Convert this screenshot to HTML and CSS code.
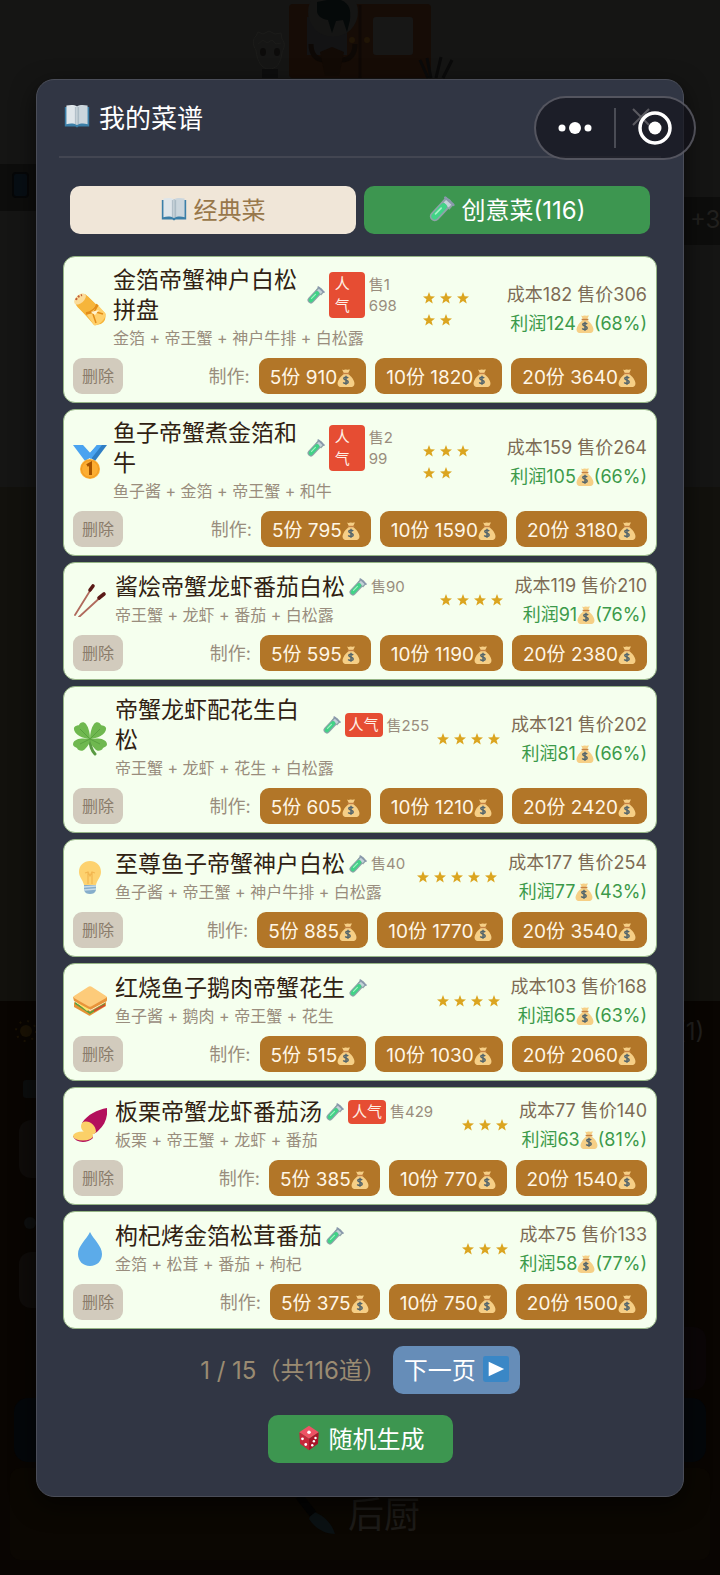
FILE: index.html
```html
<!DOCTYPE html>
<html lang="zh-CN">
<head>
  <meta charset="UTF-8">
  <meta name="viewport" content="width=device-width, initial-scale=1.0">
  <title>我的菜谱</title>
  <link rel="stylesheet" href="styles.css">
</head>
<body>

  <!-- icon set -->
  <svg class="sprite" aria-hidden="true">
    <symbol id="i-book" viewBox="0 0 32 32">
      <path fill="#3b7fa8" d="M1 5h30v24H18l-2 1-2-1H1z"/>
      <path fill="#dfe6ea" d="M3 3c5-1 10-1 13 1v23c-4-2-8-2-13-1z"/>
      <path fill="#cbd6dd" d="M29 3c-5-1-10-1-13 1v23c4-2 8-2 13-1z"/>
      <path fill="none" stroke="#9fb0bb" stroke-width="1" d="M16 4v23M14 5v21M18 5v21"/>
    </symbol>
    <symbol id="i-tube" viewBox="0 0 32 32">
      <path stroke="#8fa3a8" stroke-width="12" stroke-linecap="round" d="M7 25L22 9"/>
      <path fill="#8fa3a8" d="M15 8l6-7 10 9-6 7z"/>
      <path fill="#c3d3d8" d="M18 8l4-4 6 6-4 4z"/>
      <path stroke="#41d387" stroke-width="8" stroke-linecap="round" d="M7 25l11-12"/>
      <path stroke="#8a98ac" stroke-width="3" stroke-linecap="round" d="M20 2l10 9"/>
      <path stroke="#a5f3c4" stroke-width="2" stroke-linecap="round" d="M8 22l7-7"/>
    </symbol>
    <symbol id="i-bag" viewBox="0 0 32 32">
      <path fill="#f6cf86" d="M12 9h8c5 4 11 11 11 17 0 4-3 6-7 6H8c-4 0-7-2-7-6C1 20 7 13 12 9z"/>
      <path fill="#f6cf86" d="M9 1c3 2 5-1 7 0s4-1 7 0l-3 6h-8z"/>
      <path stroke="#c78243" stroke-width="2.500" d="M10 8h12"/>
      <path fill="none" stroke="#54656b" stroke-width="2.600" d="M20 16c-2-2-8-2-8 1s8 3 8 6-6 4-9 1M16 12v16"/>
    </symbol>
    <symbol id="i-star" viewBox="0 0 24 24">
      <path fill="#dba520" d="M12 0l3.200 8.400 8.800.5-6.900 5.600L19.500 23 12 18.200 4.500 23l2.400-8.500L0 8.900l8.800-.5z"/>
    </symbol>
    <symbol id="i-burrito" viewBox="0 0 34 34">
      <path stroke="#f6b53b" stroke-width="15" stroke-linecap="round" d="M10 10l15 15"/>
      <path fill="#f6b53b" d="M2 11L12 2l20 19c3 4-7 14-11 12z"/>
      <ellipse cx="7" cy="7" rx="7" ry="4" transform="rotate(-42 7 7)" fill="#fbdc9a"/>
      <path fill="none" stroke="#c0603a" stroke-width="2" stroke-dasharray="2 1.500" d="M3 8c1-3 3-4 6-5"/>
      <path fill="#ffd06c" d="M14 23l10-11 8 9c3 4-7 14-11 12z"/>
      <path fill="none" stroke="#e38d18" stroke-width="1.500" d="M13 21c5-1 9-4 11-9M13 22l8-2 4-7M23 20l7 2M20 22l3 9"/>
      <path fill="#fff3d0" d="M18 20l8-2-4 5z"/>
    </symbol>
    <symbol id="i-medal" viewBox="0 0 34 34">
      <path fill="#4aa3f0" d="M0 0h10l10 11-8 5z"/>
      <path fill="#2f7ec4" d="M24 0h10L22 16l-7-5z"/>
      <path fill="#4aa3f0" d="M24 0l5 0-11 14-4-3z"/>
      <circle cx="17" cy="24" r="10" fill="#fcae33"/>
      <circle cx="17" cy="24" r="8.500" fill="none" stroke="#f19a20"/>
      <path fill="none" stroke="#a55300" stroke-width="3" d="M14 20.500l3.500-2V30"/>
    </symbol>
    <symbol id="i-sticks" viewBox="0 0 34 34">
      <path stroke="#b06a5c" stroke-width="1.800" stroke-linecap="round" d="M2 32L20 3M6 34L31 11"/>
      <path stroke="#5a1a17" stroke-width="3.600" stroke-linecap="round" d="M17 7l3-4M26 15l5-4"/>
    </symbol>
    <symbol id="i-clover" viewBox="0 0 34 34">
      <path fill="none" stroke="#5a9a43" stroke-width="3" stroke-linecap="round" d="M17 17c0 7 2 12 5 15"/>
      <g fill="#6fb84f">
        <path d="M17 17C10 17 0 12 1 6c1-3 4-2 5-3 1-3 5-4 7-1 3 4 4 10 4 15z"/>
        <path d="M17 17c7 0 17-5 16-11-1-3-4-2-5-3-1-3-5-4-7-1-3 4-4 10-4 15z"/>
        <path d="M17 17c-7-1-16-1-17 5 0 3 3 3 4 4 1 3 6 4 8 1 3-3 5-6 5-10z"/>
        <path d="M17 17c7-1 16-1 17 5 0 3-3 3-4 4-1 3-6 4-8 1-3-3-5-6-5-10z"/>
      </g>
      <path stroke="#5aa240" d="M17 17L7 7M17 17L27 7M17 17L7 22M17 17l10 5"/>
    </symbol>
    <symbol id="i-bulb" viewBox="0 0 34 34">
      <path fill="#fdd26f" d="M17 1c6 0 11 4 11 11 0 5-4 8-5 13H11C10 20 6 17 6 12 6 5 11 1 17 1z"/>
      <path fill="none" stroke="#f2b650" stroke-width="1.200" d="M12 13l3-1 2 4 2-4 3 1M15 12v12M19 12v12"/>
      <path fill="#86aecb" d="M11 25h12v5c-1 3-3 4-6 4s-5-1-6-4z"/>
      <path stroke="#c6dbe9" stroke-width="1.500" d="M11 27l12-1M11 30l12-1"/>
    </symbol>
    <symbol id="i-sandwich" viewBox="0 0 34 34">
      <path fill="#e59335" d="M1 18l16 9 16-9v4L18 31c-1 1-2 1-3 0L1 23z"/>
      <path fill="#5aa040" d="M2 18l15 10 15-9v2L17 30 2 20z"/>
      <path fill="#d24b31" d="M21 26l11-6v2l-11 6z"/>
      <path fill="#fde26b" d="M3 18l11 9 6-4z"/>
      <path fill="#e8943a" d="M0 13h34v3c0 1-1 2-2 2L19 25c-1 1-2 1-3 0L1 17z"/>
      <path fill="#fdcb7a" d="M1 12L15 3c1-1 3-1 4 0l14 9c1 1 1 1 0 2l-14 8c-1 1-3 1-4 0L1 14c-1-1-1-1 0-2z"/>
    </symbol>
    <symbol id="i-potato" viewBox="0 0 34 34">
      <path fill="#b3105c" d="M34 0c1 9-2 17-9 23-4 4-9 4-12 2L9 15C15 6 24 2 34 0z"/>
      <path fill="#fbd068" d="M9 15c5-4 14 1 14 9-3 4-8 4-11 1-4-3-5-7-3-10z"/>
      <path fill="#b3105c" d="M0 28c2 7 14 8 20 2l-1-3z"/>
      <ellipse cx="10" cy="28" rx="10" ry="4.500" fill="#fbd068"/>
    </symbol>
    <symbol id="i-drop" viewBox="0 0 34 34">
      <path fill="#5cabe9" d="M17 0c4 8 12 14 12 22 0 7-5 12-12 12S5 29 5 22C5 14 13 8 17 0z"/>
    </symbol>
    <symbol id="i-play" viewBox="0 0 32 32">
      <rect width="32" height="32" rx="3" fill="#3a87c6"/>
      <path fill="#fff" d="M7 7l19 9-19 9z"/>
    </symbol>
    <symbol id="i-dice" viewBox="0 0 32 32">
      <path fill="#ee5365" d="M16 1l12 8-12 8L4 9z"/>
      <path fill="#c7283b" d="M4 9l12 8v14L5 23z"/>
      <path fill="#a91629" d="M28 9l-12 8v14l11-8z"/>
      <g fill="#fff"><circle cx="16" cy="9" r="2.200"/><circle cx="8" cy="17" r="1.700"/><circle cx="12" cy="24" r="1.700"/><circle cx="24" cy="16" r="1.500"/><circle cx="22" cy="20" r="1.500"/><circle cx="20" cy="25" r="1.500"/></g>
    </symbol>
  </svg>

  <!-- dimmed restaurant behind the dialog -->
  <div class="scene" aria-hidden="true">
    <svg viewBox="0 0 720 1575">
      <rect width="720" height="487" fill="#151514"/>
      <rect y="487" width="720" height="514" fill="#12110d"/>
      <rect y="1001" width="720" height="574" fill="#090502"/>
      <rect x="289" y="4" width="142" height="74" rx="4" fill="#160c06"/>
      <rect x="307" y="17" width="40" height="38" fill="#131314"/>
      <rect x="373" y="17" width="40" height="38" rx="3" fill="#171716"/>
      <path stroke="#0f0805" stroke-width="3" d="M360 5v73"/>
      <circle cx="352" cy="40" r="3" fill="#201506"/><circle cx="367" cy="40" r="3" fill="#201506"/>
      <circle cx="333" cy="12" r="25" fill="#151514"/>
      <path fill="#050909" d="M317 2l10-2h14c9 4 10 10 9 20l-3 12-4-12-7 1-4 12-4-13c-7-1-11-5-11-9z"/>
      <path fill="none" stroke="#0d0805" stroke-width="5" d="M311 44c0 10 5 16 14 16M355 44c0 10-5 16-14 16"/>
      <path fill="#120a05" d="M320 52l12-5 12 5-5 24h-14z"/>
      <path fill="#161615" stroke="#1c1c1a" d="M256 50c-4-5-3-12 0-14l2-4 5 2 6-3 6 3 6-1 1 6c4 5 2 9 0 13-1 12-6 17-13 17s-12-7-13-19z"/>
      <path fill="none" stroke="#1b1b19" d="M258 44l5-4 4 3 5-3 4 4 5-1"/>
      <ellipse cx="263" cy="52" rx="3" ry="4" fill="#0c0b0a"/><ellipse cx="277" cy="52" rx="3" ry="4" fill="#0c0b0a"/>
      <path fill="#0d0d0d" d="M262 69h16v9h-16z"/>
      <path fill="none" stroke="#0a0a0a" stroke-width="3" d="M420 60l8 18M427 58l4 20M441 57l-5 21M452 60l-9 18"/>
      <rect x="-20" y="164" width="80" height="47" rx="12" fill="#0d0d0c"/>
      <rect x="13" y="173" width="15" height="24" rx="3" fill="#070e14" stroke="#060708" stroke-width="2"/>
      <rect x="640" y="197" width="100" height="48" rx="4" fill="#0d0d0c"/>
      <text x="690" y="228" class="scene-label">+3</text>
      <circle cx="26" cy="1031" r="6" fill="#1a1204"/>
      <circle cx="26" cy="1031" r="10" fill="none" stroke="#1a1204" stroke-width="2" stroke-dasharray="2 6"/>
      <text x="677" y="1040" class="scene-label">(1)</text>
      <rect x="23" y="1080" width="20" height="18" rx="3" fill="#0c0e0e"/>
      <rect x="19" y="1120" width="90" height="58" rx="12" fill="#0f0c0a"/>
      <circle cx="30" cy="1223" r="6" fill="#0e0f0f"/>
      <rect x="19" y="1252" width="90" height="56" rx="12" fill="#0f0c0a"/>
      <rect x="600" y="1327" width="106" height="63" rx="12" fill="#0b0607"/>
      <rect x="14" y="1398" width="692" height="64" rx="14" fill="#04070a"/>
      <rect x="10" y="1468" width="700" height="92" rx="10" fill="#0b0702"/>
      <path fill="#0b1113" d="M312 1511c12 4 20 13 23 23-11 0-20-6-26-15z"/>
      <path stroke="#030303" stroke-width="8" d="M299 1496l14 18"/>
      <text x="348" y="1528" class="scene-title">后厨</text>
    </svg>
  </div>

  <div class="overlay">
    <main class="modal" role="dialog" aria-labelledby="title">
      <header class="modal-header">
        <h1 id="title"><svg class="icon-lg"><use href="#i-book"/></svg>我的菜谱</h1>
        <button type="button" class="close" aria-label="关闭">
          <svg width="18" height="18" viewBox="0 0 18 18"><path stroke="#fff" stroke-width="2" d="M1 1l16 16M17 1L1 17"/></svg>
        </button>
      </header>

      <div class="modal-body">
        <nav class="tabs">
          <button type="button" class="tab"><svg class="icon-lg"><use href="#i-book"/></svg>经典菜</button>
          <button type="button" class="tab active"><svg class="icon-lg"><use href="#i-tube"/></svg>创意菜(116)</button>
        </nav>

        <div class="dish-list" id="dishList"></div>

        <div class="pager">
          <span>1 / 15（共116道）</span>
          <button type="button" class="next">下一页<svg class="icon-lg"><use href="#i-play"/></svg></button>
        </div>
        <button type="button" class="random"><svg class="icon-lg"><use href="#i-dice"/></svg>随机生成</button>
      </div>
    </main>
  </div>

  <div class="capsule">
    <button type="button" aria-label="更多">
      <svg width="36" height="14" viewBox="0 0 36 14" fill="#fff"><circle cx="5" cy="7" r="3.500"/><circle cx="18" cy="7" r="6"/><circle cx="31" cy="7" r="3.500"/></svg>
    </button>
    <button type="button" aria-label="退出">
      <svg width="34" height="34" viewBox="0 0 34 34"><circle cx="17" cy="17" r="15" fill="none" stroke="#fff" stroke-width="3.500"/><circle cx="17" cy="17" r="6.500" fill="#fff"/></svg>
    </button>
  </div>

  <script>
    const dishes = [
      { icon: 'burrito', name: '金箔帝蟹神户白松拼盘', parts: ['金箔', '帝王蟹', '神户牛排', '白松露'], hot: true, sold: '1<br>698', stars: 5, cost: 182, price: 306, profit: 124, rate: 68, tight: true },
      { icon: 'medal', name: '鱼子帝蟹煮金箔和牛', parts: ['鱼子酱', '金箔', '帝王蟹', '和牛'], hot: true, sold: '2<br>99', stars: 5, cost: 159, price: 264, profit: 105, rate: 66, tight: true },
      { icon: 'sticks', name: '酱烩帝蟹龙虾番茄白松', parts: ['帝王蟹', '龙虾', '番茄', '白松露'], sold: '90', stars: 4, cost: 119, price: 210, profit: 91, rate: 76 },
      { icon: 'clover', name: '帝蟹龙虾配花生白松', parts: ['帝王蟹', '龙虾', '花生', '白松露'], hot: true, sold: '255', stars: 4, cost: 121, price: 202, profit: 81, rate: 66 },
      { icon: 'bulb', name: '至尊鱼子帝蟹神户白松', parts: ['鱼子酱', '帝王蟹', '神户牛排', '白松露'], sold: '40', stars: 5, cost: 177, price: 254, profit: 77, rate: 43 },
      { icon: 'sandwich', name: '红烧鱼子鹅肉帝蟹花生', parts: ['鱼子酱', '鹅肉', '帝王蟹', '花生'], stars: 4, cost: 103, price: 168, profit: 65, rate: 63 },
      { icon: 'potato', name: '板栗帝蟹龙虾番茄汤', parts: ['板栗', '帝王蟹', '龙虾', '番茄'], hot: true, sold: '429', stars: 3, cost: 77, price: 140, profit: 63, rate: 81 },
      { icon: 'drop', name: '枸杞烤金箔松茸番茄', parts: ['金箔', '松茸', '番茄', '枸杞'], stars: 3, cost: 75, price: 133, profit: 58, rate: 77 }
    ];

    function icon(name, cls) {
      return `<svg class="${cls}" aria-hidden="true"><use href="#i-${name}"/></svg>`;
    }

    function makeButton(count, cost) {
      return `<button type="button" class="make">${count}份 ${cost * count}${icon('bag', 'bag')}</button>`;
    }

    function renderDish(d) {
      return `
        <article class="dish${d.tight ? ' tight' : ''}">
          <div class="dish-top">
            ${icon(d.icon, 'dish-icon')}
            <div class="info">
              <div class="name-row">
                <h2>${d.name}</h2>
                ${icon('tube', 'tube')}
                ${d.hot ? '<span class="hot">人气</span>' : ''}
                ${d.sold ? `<span class="sold">售${d.sold}</span>` : ''}
              </div>
              <p class="parts">${d.parts.join(' + ')}</p>
            </div>
            <div class="stars">${icon('star', 'star').repeat(d.stars)}</div>
            <div class="money">
              <div>成本${d.cost} 售价${d.price}</div>
              <div class="profit">利润${d.profit}${icon('bag', 'bag')}(${d.rate}%)</div>
            </div>
          </div>
          <div class="dish-actions">
            <button type="button" class="delete">删除</button>
            <span class="make-label">制作:</span>
            ${makeButton(5, d.cost)}${makeButton(10, d.cost)}${makeButton(20, d.cost)}
          </div>
        </article>`;
    }

    // 5份 / 10份 / 20份 prices are cost * count
    document.getElementById('dishList').innerHTML = dishes.map(renderDish).join('');
  </script>

</body>
</html>
```

FILE: styles.css
```css
* {
  box-sizing: border-box;
}
body {
  margin: 0;
  display: grid;
  position: relative;
  background: #090502;
  font-family: "Inter", "Noto Sans CJK SC", sans-serif;
  color: #fff;
}
button {
  border: none;
  padding: 0;
  font-family: inherit;
  color: inherit;
  cursor: pointer;
}
h1, h2, p {
  margin: 0;
  font-weight: 400;
}
.sprite {
  position: absolute;
  width: 0;
  height: 0;
}

/* background scene and overlay share one cell */
.scene, .overlay {
  grid-area: 1 / 1;
}
.scene svg {
  display: block;
  width: 100%;
}
.scene-label {
  font-size: 24px;
  fill: #21201e;
}
.scene-title {
  font-size: 36px;
  fill: #1d1b18;
}
.overlay {
  z-index: 1;
  padding: 79px 36px 78px;
}
.modal {
  padding: 0 22px 33px;
  background: #313644;
  border: 1px solid #4a4d58;
  border-radius: 18px;
  box-shadow: 0 8px 24px rgba(0, 0, 0, 0.6);
}
.modal-header {
  display: flex;
  justify-content: space-between;
  align-items: center;
  height: 78px;
  padding: 0 11px 2px 5px;
  border-bottom: 2px solid #434652;
}
.modal-header h1 {
  display: flex;
  align-items: center;
  gap: 9px;
  padding-bottom: 2px;
  font-size: 26px;
}
.icon-lg {
  width: 26px;
  height: 26px;
}
.close {
  width: 18px;
  height: 18px;
  background: none;
}
.close svg {
  display: block;
}
.modal-body {
  display: flex;
  flex-direction: column;
  padding: 28px 4px 0;
}

.tabs {
  display: flex;
  gap: 8px;
  padding: 0 7px;
  margin-bottom: 22px;
}
.tab, .next, .random {
  display: flex;
  align-items: center;
  justify-content: center;
  gap: 7px;
  height: 48px;
  padding-bottom: 3px;
  border-radius: 10px;
  font-size: 24px;
}
.tab {
  flex: 1;
  background: #f0e6d8;
  color: #98774a;
}
.tab.active {
  background: #3d9650;
  color: #fff;
}

.dish-list {
  display: flex;
  flex-direction: column;
  gap: 6px;
}
.dish {
  display: flex;
  flex-direction: column;
  gap: 6px;
  padding: 8px 9px;
  background: #f5ffee;
  border: 1px solid #95b585;
  border-radius: 12px;
}
.dish-top {
  display: flex;
  align-items: center;
  gap: 8px;
}
.dish-icon {
  flex: none;
  width: 34px;
  height: 34px;
}
.info {
  flex: 1;
  min-width: 0;
}
.name-row {
  display: flex;
  align-items: center;
  gap: 4px;
}
.name-row h2 {
  font-size: 23px;
  line-height: 30px;
  color: #302112;
}
.tube {
  flex: none;
  width: 18px;
  height: 18px;
}
.hot {
  flex: none;
  padding: 0 4px;
  border-radius: 4px;
  background: #e64d33;
  color: #fff0e6;
  font-size: 15px;
  line-height: 24px;
}
.sold {
  flex: none;
  color: #998d7d;
  font-size: 15px;
  line-height: 21px;
}
.parts {
  color: #998d7d;
  font-size: 16px;
  line-height: 27px;
  white-space: nowrap;
}
.stars {
  flex: none;
  display: flex;
  flex-wrap: wrap;
  gap: 10px 5px;
  padding-right: 3px;
}
.star {
  width: 12px;
  height: 12px;
}
.money {
  flex: none;
  text-align: right;
  font-size: 18px;
  line-height: 29px;
  color: #7d6b55;
}
.profit {
  color: #3c9a4a;
}
.bag {
  width: 18px;
  height: 18px;
  vertical-align: -3px;
}

/* long name plus five stars: badge, counter and stars wrap */
.tight .dish-top {
  gap: 6px;
}
.tight .name-row h2 {
  flex: 1;
}
.tight .hot {
  width: 36px;
  padding: 1px 6px;
  line-height: 22px;
  word-break: break-all;
}
.tight .sold {
  width: 48px;
}
.tight .stars {
  width: 78px;
  padding-right: 20px;
}

.dish-actions {
  display: flex;
  align-items: center;
  gap: 9px;
}
.delete, .make {
  height: 36px;
  padding: 0 11px 2px;
  border-radius: 9px;
}
.delete {
  padding: 0 9px 2px;
  margin-right: auto;
  background: #d2cbbd;
  color: #8a7c6b;
  font-size: 16px;
}
.make-label {
  padding-bottom: 2px;
  color: #998d7d;
  font-size: 18px;
}
.make {
  background: #b27628;
  color: #fff6e6;
  font-size: 19px;
}

.pager {
  display: flex;
  justify-content: center;
  align-items: center;
  gap: 6px;
  margin: 17px 0 21px;
  font-size: 24px;
  color: #9a8b72;
}
.pager span {
  padding-bottom: 3px;
}
.next {
  padding: 0 11px 3px;
  background: #668db8;
  color: #fff;
}
.random {
  align-self: center;
  padding: 0 28px 3px;
  background: #3d9650;
}

/* host app menu, floats over everything */
.capsule {
  position: absolute;
  z-index: 2;
  top: 96px;
  right: 24px;
  display: flex;
  align-items: center;
  width: 162px;
  height: 64px;
  border: 2px solid rgba(140, 140, 150, 0.5);
  border-radius: 32px;
  background: rgba(20, 20, 28, 0.7);
}
.capsule button {
  flex: 1;
  display: flex;
  align-items: center;
  justify-content: center;
  height: 40px;
  background: none;
}
.capsule button + button {
  border-left: 2px solid #4a4c55;
}
```
